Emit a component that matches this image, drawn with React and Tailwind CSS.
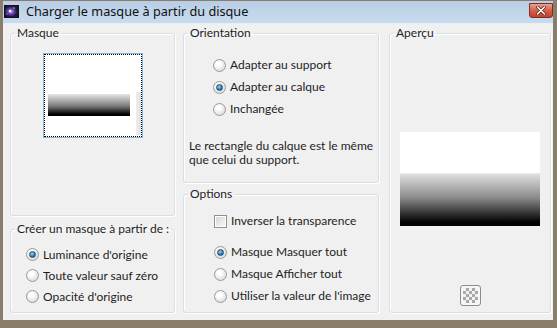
import React from 'react'

// Vista-style radio button
function Radio({ checked }) {
    return (
        <span className="w-[13px] h-[13px] shrink-0 rounded-full border border-[#9a9a9a] bg-[radial-gradient(circle_at_40%_35%,#ffffff_20%,#d4d4d4_90%)] flex items-center justify-center">
            {checked && (
                <span className="w-[7px] h-[7px] rounded-full border border-[#1d4f74] bg-[radial-gradient(circle_at_40%_35%,#9ad8f8,#2a78b0_60%,#164c74)]" />
            )}
        </span>
    )
}

function Checkbox() {
    return (
        <span className="w-[13px] h-[13px] shrink-0 border border-[#8f8f8f] bg-white p-[1px]">
            <span className="block w-full h-full bg-gradient-to-br from-[#d8d8d8] to-[#f6f6f6]" />
        </span>
    )
}

function Option({ checked, label, h = 'h-[22px]' }) {
    return (
        <div className={`${h} flex items-center gap-[4px] whitespace-nowrap`}>
            <Radio checked={checked} />
            <span>{label}</span>
        </div>
    )
}

function GroupBox({ title, className, children }) {
    return (
        <fieldset className={`border border-[#d5dfe5] rounded-[3px] shadow-[inset_1px_1px_0_#ffffff,1px_1px_0_#ffffff] ${className}`}>
            <legend className="ml-[4px] px-[2px] leading-[14px] whitespace-nowrap text-[#1e1e1e]">{title}</legend>
            {children}
        </fieldset>
    )
}

function AppIcon() {
    return (
        <svg width="15" height="13" viewBox="0 0 15 13">
            <defs>
                <radialGradient id="glow" cx="0.45" cy="0.5" r="0.5">
                    <stop offset="0" stopColor="#d7b6ff" />
                    <stop offset="0.45" stopColor="#6a47b8" />
                    <stop offset="1" stopColor="#1b1530" />
                </radialGradient>
            </defs>
            <rect x="0" y="0" width="15" height="13" fill="#141022" />
            <rect x="1" y="1" width="13" height="11" fill="url(#glow)" />
            <circle cx="6" cy="6" r="1.2" fill="#ffffff" />
            <circle cx="10" cy="3" r="0.7" fill="#e8dcff" />
            <circle cx="3" cy="9" r="0.6" fill="#c7b5ff" />
        </svg>
    )
}

function CloseButton() {
    return (
        <div className="w-[24px] h-[15px] mt-[2px] rounded-b-[3px] border border-[#7d2d22] bg-gradient-to-b from-[#e8a191] via-[#d3614c] to-[#c0422e] flex items-center justify-center">
            <svg width="10" height="9" viewBox="0 0 10 9">
                <path d="M1.5 1 L8.5 8 M8.5 1 L1.5 8" stroke="#5b1f17" strokeWidth="3" strokeLinecap="round" />
                <path d="M1.5 1 L8.5 8 M8.5 1 L1.5 8" stroke="#ffffff" strokeWidth="1.6" strokeLinecap="round" />
            </svg>
        </div>
    )
}

export default function App() {
    return (
        <div className="w-[557px] h-[328px] bg-[#8a7e6b] pt-[1px] pl-[3px] pr-[4px] pb-[8px] font-['Lato',sans-serif] text-[12px] text-[#1e1e1e]">
            {/* Title bar */}
            <div className="h-[23px] flex items-start bg-gradient-to-b from-[#b8cee6] to-[#c9dbee] border-b border-[#e6eef6]">
                <div className="ml-[1px] mt-[4px]">
                    <AppIcon />
                </div>
                <span className="ml-[7px] mt-[2px] font-['Noto_Sans',sans-serif] text-[12.7px] leading-[17px] text-[#101010] whitespace-nowrap">Charger le masque à partir du disque</span>
                <div className="ml-auto">
                    <CloseButton />
                </div>
            </div>

            {/* Body */}
            <div className="h-[296px] bg-[#f0f0f0] flex pt-[2px] pl-[7px]">
                <div className="w-[165px] flex flex-col gap-[6px]">
                    <GroupBox title="Masque" className="h-[190px]">
                        <div className="flex justify-center mt-[13px]">
                            <div className="w-[100px] h-[85px] border border-[#7fb8d9]">
                                <div className="h-full border border-dotted border-black bg-white flex items-start pl-[3px] pt-[37px]">
                                    <div className="w-[82px] h-[22px] mt-[2px] bg-[linear-gradient(to_bottom,#e6e6e6,#7a7a7a_55%,#000000_92%)]" />
                                    <div className="w-[5px] h-[43px] ml-[6px] bg-gradient-to-r from-[#eeeeee] to-[#e0e0e0]" />
                                </div>
                            </div>
                        </div>
                    </GroupBox>
                    <GroupBox title="Créer un masque à partir de :" className="h-[91px]">
                        <div className="mt-[8px] pl-[15px]">
                            <Option checked label="Luminance d'origine" h="h-[21px]" />
                            <Option label="Toute valeur sauf zéro" h="h-[21px]" />
                            <Option label="Opacité d'origine" h="h-[21px]" />
                        </div>
                    </GroupBox>
                </div>

                <div className="w-[196px] ml-[8px] flex flex-col gap-[4px]">
                    <GroupBox title="Orientation" className="h-[157px]">
                        <div className="mt-[14px] pl-[29px]">
                            <Option label="Adapter au support" />
                            <Option checked label="Adapter au calque" />
                            <Option label="Inchangée" />
                        </div>
                        <p className="mt-[19px] pl-[5px] leading-[14px] whitespace-nowrap">
                            Le rectangle du calque est le même<br />que celui du support.
                        </p>
                    </GroupBox>
                    <GroupBox title="Options" className="h-[126px]">
                        <div className="mt-[9px] pl-[30px]">
                            <div className="h-[22px] flex items-center gap-[4px] whitespace-nowrap">
                                <Checkbox />
                                <span>Inverser la transparence</span>
                            </div>
                            <div className="mt-[9px]">
                                <Option checked label="Masque Masquer tout" />
                                <Option label="Masque Afficher tout" />
                                <Option label="Utiliser la valeur de l'image" />
                            </div>
                        </div>
                    </GroupBox>
                </div>

                <div className="w-[162px] ml-[10px]">
                    <GroupBox title="Aperçu" className="h-[287px]">
                        <div className="flex flex-col items-center">
                            <div className="mt-[92px] w-[140px] h-[94px] bg-[linear-gradient(to_bottom,#ffffff_0%,#ffffff_43%,#dedede_45%,#8a8a8a_70%,#000000_96%)]" />
                            <div className="mt-[59px] w-[21px] h-[21px] rounded-[3px] border border-[#8c8c8c] bg-[#f7f7f7] p-[2px]">
                                <div className="w-full h-full bg-[repeating-conic-gradient(#a8a8a8_0_25%,#f2f2f2_0_50%)] bg-[length:6px_6px]" />
                            </div>
                        </div>
                    </GroupBox>
                </div>
            </div>
        </div>
    )
}
